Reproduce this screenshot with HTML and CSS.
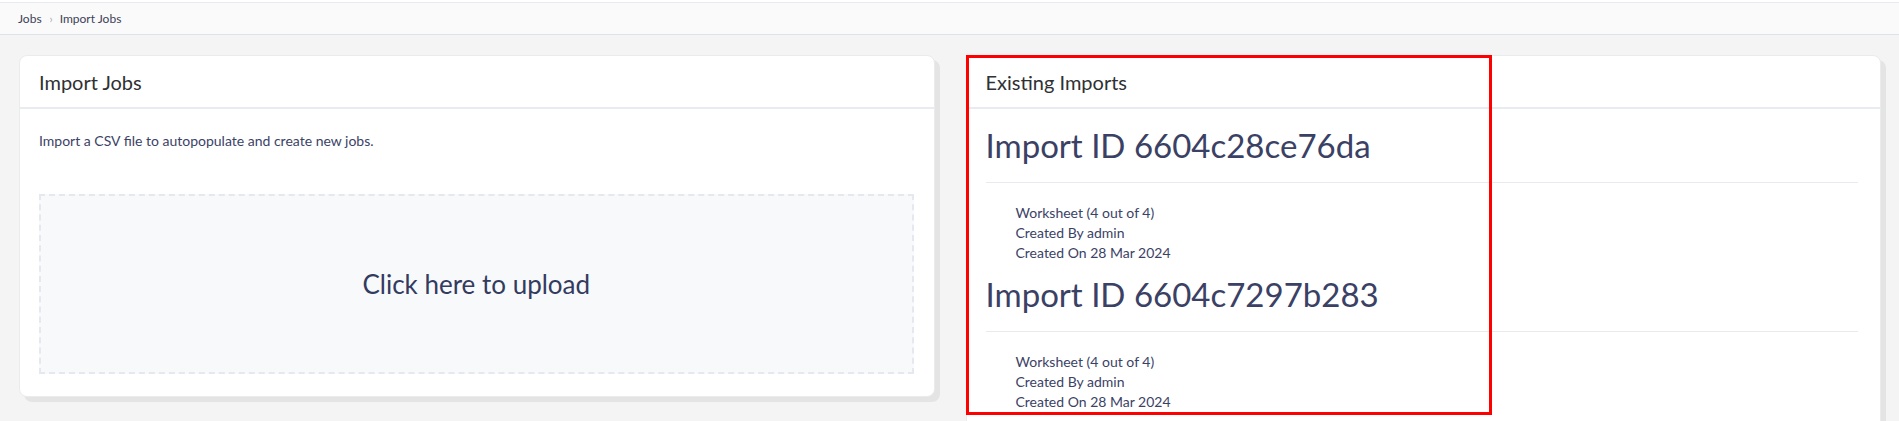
FILE: index.html
```html
<!DOCTYPE html>
<html lang="en">
<head>
<meta charset="utf-8">
<title>Import Jobs</title>
<link rel="stylesheet" href="styles.css">
</head>
<body>
  <div class="top">
    <nav class="crumbs">
      <a class="crumb" href="#">Jobs</a>
      <span class="sep">›</span>
      <span class="crumb">Import Jobs</span>
    </nav>
  </div>
  <main class="grid">
    <section class="card">
      <header class="card-head">Import Jobs</header>
      <div class="card-body">
        <p class="lead">Import a CSV file to autopopulate and create new jobs.</p>
        <div class="dropzone">Click here to upload</div>
      </div>
    </section>
    <section class="card">
      <header class="card-head">Existing Imports</header>
      <div class="card-body imports">
        <article class="import">
          <h2 class="import-title">Import ID 6604c28ce76da</h2>
          <hr class="rule">
          <ul class="meta">
            <li>Worksheet (4 out of 4)</li>
            <li>Created By admin</li>
            <li>Created On 28 Mar 2024</li>
          </ul>
        </article>
        <article class="import">
          <h2 class="import-title">Import ID 6604c7297b283</h2>
          <hr class="rule">
          <ul class="meta">
            <li>Worksheet (4 out of 4)</li>
            <li>Created By admin</li>
            <li>Created On 28 Mar 2024</li>
          </ul>
        </article>
      </div>
      <div class="highlight"></div>
    </section>
  </main>
</body>
</html>
```
FILE: styles.css
```css
* { box-sizing: border-box; }

html, body {
  margin: 0;
  padding: 0;
}

body {
  background: #f4f4f4;
  font-family: Lato, "Noto Sans", Arial, sans-serif;
  color: #3b4266;
}

.top {
  background: #ffffff;
  padding-top: 2px;
}

.crumbs {
  display: flex;
  align-items: center;
  height: 33px;
  padding: 0 18px;
  background: #fafafa;
  border-top: 1px solid #e8e9f1;
  border-bottom: 1px solid #dce3eb;
  font-size: 12px;
  line-height: 31px;
}

.crumb {
  color: #3c4258;
  text-decoration: none;
}

.sep {
  color: #a6a9b3;
  font-size: 11px;
  margin: 0 7px 0 8px;
}

.grid {
  display: grid;
  grid-template-columns: 1fr 1fr;
  column-gap: 31px;
  align-items: start;
  padding: 20px 18px 0 19px;
}

.card {
  position: relative;
  background: #ffffff;
  border: 1px solid #ebebeb;
  border-radius: 8px;
  box-shadow: 5px 5px 0 #e4e4e4;
}

.card-head {
  padding: 14px 20px 13px 19px;
  font-size: 20px;
  line-height: 24px;
  color: #2f3033;
  border-bottom: 2px solid #e8ebef;
}

.card-body {
  padding: 22px 20px 22px 19px;
}

.lead {
  margin: 0;
  font-size: 14px;
  line-height: 20px;
  color: #3b4266;
}

.dropzone {
  margin-top: 43px;
  height: 180px;
  display: flex;
  align-items: center;
  justify-content: center;
  background: #f8f9fb;
  border: 2px dashed #e5e8ee;
  font-size: 26px;
  color: #333b5e;
}

.imports {
  padding: 17px 22px 12px 19px;
}

.import-title {
  margin: 0;
  font-size: 33px;
  line-height: 38px;
  font-weight: 400;
  color: #3a4164;
}

.rule {
  margin: 18px 0 0;
  border: 0;
  border-top: 1px solid #e9eaed;
  height: 0;
}

.meta {
  list-style: none;
  margin: 20px 0 12px;
  padding: 0 0 0 30px;
  font-size: 14px;
  line-height: 20px;
  color: #3b4266;
}

.highlight {
  position: absolute;
  top: -1px;
  left: -1px;
  width: 526px;
  height: 360px;
  border: 3px solid #ff0000;
  pointer-events: none;
}
```
